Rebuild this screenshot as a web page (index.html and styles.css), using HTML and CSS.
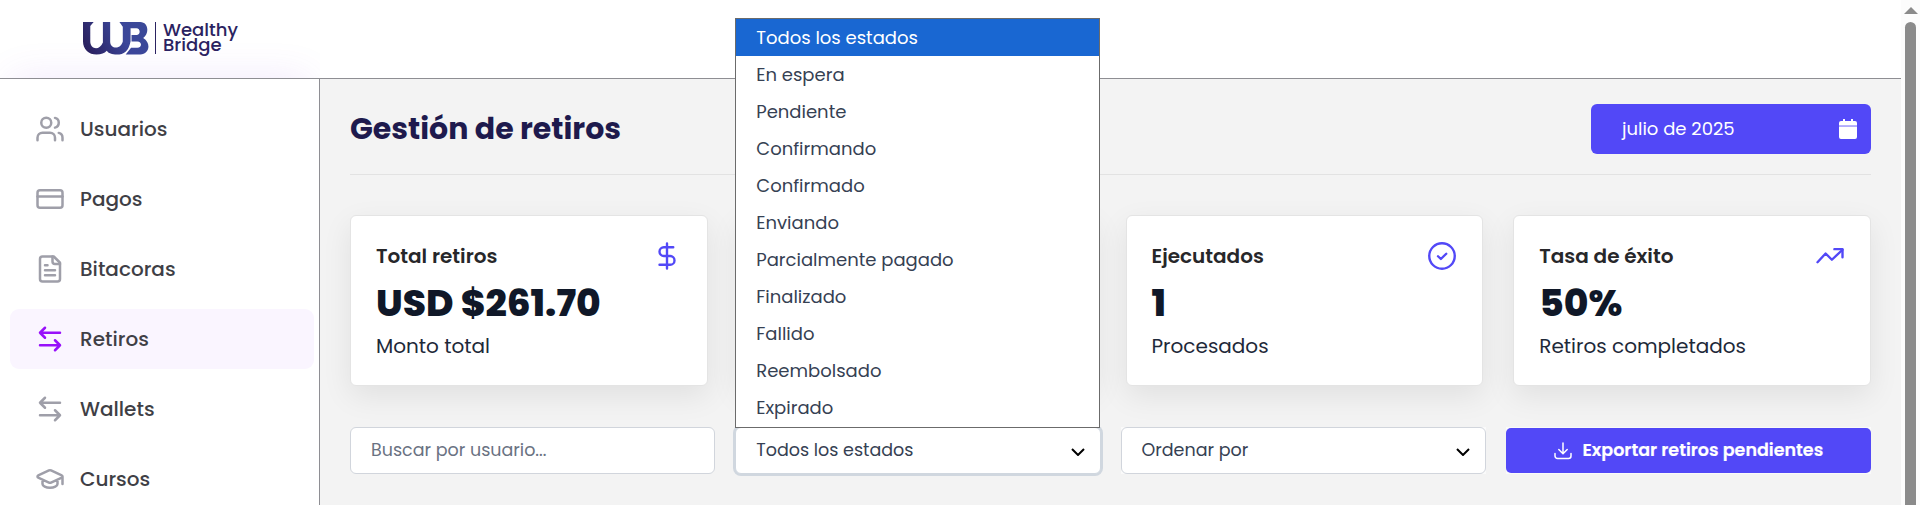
FILE: index.html
```html
<!DOCTYPE html>
<html lang="es">
<head>
<meta charset="utf-8">
<title>Gestión de retiros</title>
<link rel="stylesheet" href="styles.css">
</head>
<body>
<div class="page">
  <div class="app">
    <header class="topbar">
      <div class="brand">
        <svg class="brand-mark" viewBox="0 0 68 34" aria-hidden="true">
          <defs>
            <linearGradient id="mark" x1="0" y1="34" x2="68" y2="0" gradientUnits="userSpaceOnUse">
              <stop offset="0.1" stop-color="#2b2361"/>
              <stop offset="0.6" stop-color="#3c479a"/>
              <stop offset="1" stop-color="#3b4a98"/>
            </linearGradient>
          </defs>
          <path fill="url(#mark)" d="M0 0H11L7.500 4V20C7.500 28 17 30 20.500 21V0H28V20C28 28 38.500 29 41 20V5L37.500 0H59C67 0 69 11 62 16.500C71 22 68 33.500 59 33.500H44L49.500 26.500H56C61 26.500 61 20 56 20H50V13.500H55C59.500 13.500 59.500 6.500 55 6.500H49V20C47 30 42 33.500 35 33.500C30 33.500 26 32 24.500 29.500C22 32 19 33.500 14 33.500C6 33.500 0 28 0 20Z"/>
        </svg>
        <span class="brand-line"></span>
        <span class="brand-name"><span>Wealthy</span><span>Bridge</span></span>
      </div>
    </header>
    <div class="body">
      <nav class="sidebar">
        <a class="nav-item"><svg class="icon" viewBox="0 0 24 24"><path d="M16 21v-2a4 4 0 0 0-4-4H6a4 4 0 0 0-4 4v2"/><circle cx="9" cy="7" r="4"/><path d="M22 21v-2a4 4 0 0 0-3-3.870M16 3.130a4 4 0 0 1 0 7.750"/></svg><span>Usuarios</span></a>
        <a class="nav-item"><svg class="icon" viewBox="0 0 24 24"><rect x="2" y="5" width="20" height="14" rx="2"/><path d="M2 10h20"/></svg><span>Pagos</span></a>
        <a class="nav-item"><svg class="icon" viewBox="0 0 24 24"><path d="M15 2H6a2 2 0 0 0-2 2v16a2 2 0 0 0 2 2h12a2 2 0 0 0 2-2V7Z"/><path d="M14 2v4a2 2 0 0 0 2 2h4M10 9H8M16 13H8M16 17H8"/></svg><span>Bitacoras</span></a>
        <a class="nav-item active"><svg class="icon" viewBox="0 0 24 24"><path d="M8 3 4 7l4 4M4 7h16M16 21l4-4-4-4M20 17H4"/></svg><span>Retiros</span></a>
        <a class="nav-item"><svg class="icon" viewBox="0 0 24 24"><path d="M8 3 4 7l4 4M4 7h16M16 21l4-4-4-4M20 17H4"/></svg><span>Wallets</span></a>
        <a class="nav-item"><svg class="icon" viewBox="0 0 24 24"><path d="M21.420 10.922a1 1 0 0 0-.019-1.838L12.830 5.180a2 2 0 0 0-1.660 0L2.600 9.080a1 1 0 0 0 0 1.832l8.570 3.908a2 2 0 0 0 1.660 0zM22 10v6M6 12.500V16a6 3 0 0 0 12 0v-3.500"/></svg><span>Cursos</span></a>
      </nav>
      <main class="main">
        <div class="heading">
          <h1 class="title">Gestión de retiros</h1>
          <div class="month">
            <span>julio de 2025</span>
            <svg class="calendar" viewBox="0 0 18 20"><path fill="#fff" d="M0 6V4a2 2 0 0 1 2-2h2V0h2v2h6V0h2v2h2a2 2 0 0 1 2 2v2zM0 7.500h18V18a2 2 0 0 1-2 2H2a2 2 0 0 1-2-2z"/><path fill="#b8b4fc" d="M0 6h18v1.500H0z"/></svg>
          </div>
        </div>
        <section class="cards">
          <article class="card">
            <div class="card-head"><span>Total retiros</span><svg class="card-icon" viewBox="0 0 24 24"><path d="M12 2v20M17 5H9.500a3.500 3.500 0 0 0 0 7h5a3.500 3.500 0 0 1 0 7H6"/></svg></div>
            <strong class="value">USD $261.70</strong>
            <span class="note">Monto total</span>
          </article>
          <article class="card"></article>
          <article class="card">
            <div class="card-head"><span>Ejecutados</span><svg class="card-icon" viewBox="0 0 24 24"><circle cx="12" cy="12" r="10.200"/><path d="m8.800 12.200 2.300 2.200 4.300-4.200"/></svg></div>
            <strong class="value">1</strong>
            <span class="note">Procesados</span>
          </article>
          <article class="card">
            <div class="card-head"><span>Tasa de éxito</span><svg class="card-icon" viewBox="0 0 24 24"><path d="m2 17 6.500-7 5 5L22 7"/><path d="M15.500 6.500H22V13"/></svg></div>
            <strong class="value">50%</strong>
            <span class="note">Retiros completados</span>
          </article>
        </section>
        <section class="filters">
          <div class="field"><span class="placeholder">Buscar por usuario...</span></div>
          <div class="field focused">
            <span>Todos los estados</span>
            <svg class="chevron" viewBox="0 0 14 8"><path d="m1 1 6 6 6-6"/></svg>
            <ul class="menu">
              <li class="selected">Todos los estados</li>
              <li>En espera</li>
              <li>Pendiente</li>
              <li>Confirmando</li>
              <li>Confirmado</li>
              <li>Enviando</li>
              <li>Parcialmente pagado</li>
              <li>Finalizado</li>
              <li>Fallido</li>
              <li>Reembolsado</li>
              <li>Expirado</li>
            </ul>
          </div>
          <div class="slot"><div class="field"><span>Ordenar por</span><svg class="chevron" viewBox="0 0 14 8"><path d="m1 1 6 6 6-6"/></svg></div></div>
          <div class="slot"><button class="export"><svg class="download" viewBox="0 0 18 18"><path d="M1 11.500V14a2.500 2.500 0 0 0 2.500 2.500h11A2.500 2.500 0 0 0 17 14v-2.500M9 1v10.500M4.800 7.500 9 11.700l4.200-4.200"/></svg><span>Exportar retiros pendientes</span></button></div>
        </section>
      </main>
    </div>
  </div>
  <div class="scrollbar"><span class="scroll-up"></span><span class="thumb"></span></div>
</div>
</body>
</html>
```

FILE: styles.css
```css
* { box-sizing: border-box; }
body { margin: 0; font-family: Poppins, Inter, "Noto Sans", sans-serif; background: #fff; overflow: hidden; }
.page { display: flex; width: 1920px; height: 505px; overflow: hidden; }
.app { width: 1901px; display: flex; flex-direction: column; }
.topbar { height: 79px; border-bottom: 1px solid #8e8e93; background: #fff; display: flex; flex: none; }
.brand { position: relative; overflow: hidden; width: 320px; height: 78px; padding: 22px 0 0 82px; display: flex; align-items: flex-start; }
.brand::after { content: ""; position: absolute; left: 12px; right: 12px; top: 100%; height: 40px; box-shadow: 0 0 38px rgba(147, 80, 235, .13); }
.brand-mark { width: 68px; height: 33px; }
.brand-line { width: 1px; height: 32px; margin-left: 5px; background: #2b2361; }
.brand-name { display: flex; flex-direction: column; margin-left: 7px; color: #2b2361; font-size: 18px; font-weight: 500; line-height: 15px; }
.body { display: flex; height: 426px; }
.sidebar { width: 320px; flex: none; border-right: 1px solid #8e8e93; padding: 20px 5px 0 10px; display: flex; flex-direction: column; gap: 10px; background: #fff; }
.nav-item { width: 304px; height: 60px; flex: none; display: flex; align-items: center; gap: 15px; padding-left: 25px; border-radius: 9px; color: #3f3f46; font-size: 20px; font-weight: 500; line-height: 30px; white-space: nowrap; }
.nav-item span { margin-bottom: 1px; }
.nav-item.active { background: #faf5ff; }
.icon { width: 30px; height: 30px; flex: none; fill: none; stroke: #9f9fa9; stroke-width: 2; stroke-linecap: round; stroke-linejoin: round; }
.active .icon { stroke: #9810fa; }
.main { flex: 1; background: #f3f3f3; padding: 25px 30px 0; }
.heading { display: flex; justify-content: space-between; height: 71px; border-bottom: 1px solid #e2e2e2; }
.title { margin: 0; font-size: 30px; font-weight: 700; line-height: 50px; color: #1e1a4d; white-space: nowrap; }
.month { width: 280px; height: 50px; border-radius: 6px; background: #5248f7; color: #fff; display: flex; align-items: center; justify-content: space-between; padding: 0 14px 0 31px; font-size: 18px; }
.month span { margin-bottom: 1px; }
.calendar { width: 18px; height: 20px; }
.cards { display: grid; grid-template-columns: repeat(4, 1fr); gap: 30px; margin-top: 40px; }
.card { height: 171px; background: #fff; border: 1px solid #e4e4e4; border-radius: 6px; box-shadow: 0 10px 30px rgba(0, 0, 0, .08); padding: 25px 25px 0; display: flex; flex-direction: column; white-space: nowrap; }
.card-head { display: flex; justify-content: space-between; align-items: center; height: 30px; font-size: 20px; font-weight: 600; color: #27272a; }
.card-icon { width: 30px; height: 30px; fill: none; stroke: #5248f7; stroke-width: 1.9; stroke-linecap: round; stroke-linejoin: round; }
.value { font-size: 37.5px; line-height: 50px; margin-top: 7px; font-weight: 800; color: #101828; }
.note { font-size: 20px; line-height: 28px; margin-top: 4px; color: #1e2939; }
.filters { display: grid; grid-template-columns: repeat(4, 1fr); gap: 20px; margin-top: 41px; }
.slot { height: 47px; background: #fafafa; }
.field { position: relative; height: 47px; background: #fff; border: 1px solid #d1d5dc; border-radius: 6px; display: flex; align-items: center; justify-content: space-between; padding: 0 15px 2px 20px; font-size: 17.5px; color: #364153; white-space: nowrap; }
.placeholder { color: #6a7282; }
.field.focused { border-color: #d0d7df; box-shadow: 0 0 0 2px #d0d7df; }
.chevron { width: 14px; height: 8px; margin-top: 5px; fill: none; stroke: #000; stroke-width: 2; }
.menu { position: absolute; left: -1px; bottom: 45px; width: 365px; height: 410px; margin: 0; padding: 0; list-style: none; background: #fff; border: 1px solid #6b6b6b; font-size: 18px; z-index: 2; }
.menu li { height: 37px; line-height: 36px; padding: 1px 0 0 20px; }
.menu .selected { background: #1967d2; color: #fff; }
.export { width: 100%; height: 45px; margin: 1px 0; border: 0; border-radius: 5px; background: #5248f7; color: #fff; display: flex; align-items: center; justify-content: center; gap: 11px; padding: 0 0 1px; font: 600 17.5px Poppins, Inter, sans-serif; white-space: nowrap; -webkit-text-stroke: .2px #fff; }
.download { width: 18px; height: 18px; margin-top: 2px; fill: none; stroke: #fff; stroke-width: 1.5; stroke-linecap: round; stroke-linejoin: round; }
.scrollbar { width: 19px; background: #fcfcfc; display: flex; flex-direction: column; align-items: center; padding-top: 7px; }
.scroll-up { border: 7px solid transparent; border-top: 0; border-bottom: 7px solid #8b8b8b; }
.thumb { width: 11px; height: 520px; flex: none; margin-top: 8px; border-radius: 6px; background: #8b8b8b; }
```
